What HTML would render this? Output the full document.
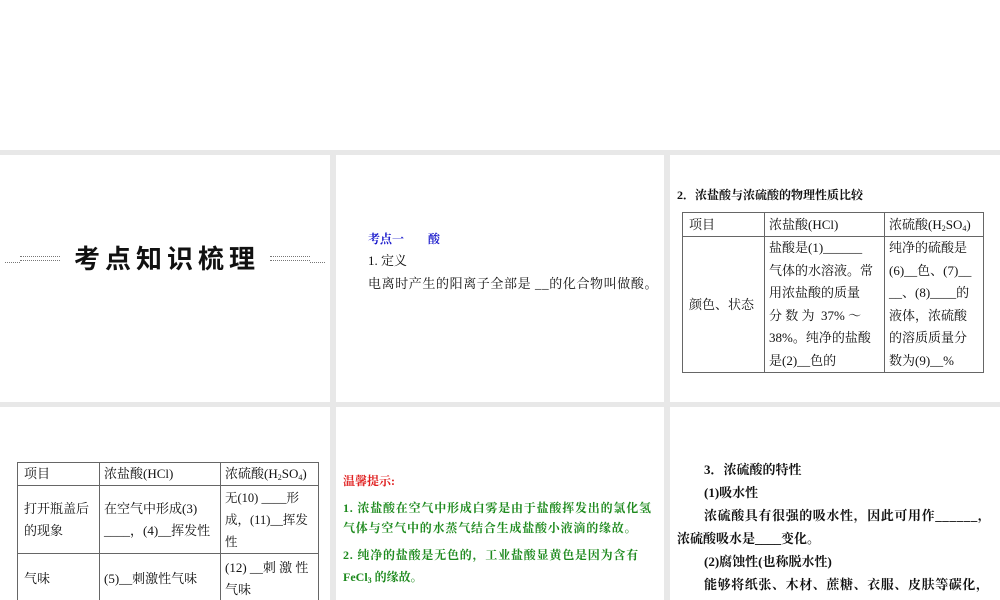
<!DOCTYPE html>
<html style="overflow:hidden"><head><meta charset="utf-8"><style>
*{margin:0;padding:0;box-sizing:border-box}
html,body{width:1000px;height:600px;overflow:hidden}
body{background:#fff;position:relative;font-family:"Liberation Serif","Noto Serif CJK SC",serif;color:#111;font-size:13px}
.g{position:absolute;background:#e8e8e8}
.t{position:absolute;white-space:nowrap;line-height:16px}
.b{font-weight:bold}
table{position:absolute;border-collapse:collapse;font-size:13px;table-layout:fixed}
td{border:1px solid #666;padding:0 4px;vertical-align:middle;line-height:22px;overflow:hidden;white-space:nowrap}
sub{font-size:8px;vertical-align:-2px;line-height:0}
.dl{position:absolute;height:5px;border-top:1px dotted #777;border-bottom:1px dotted #777}
</style></head><body>
<div class="g" style="left:0;top:150px;width:1000px;height:5px"></div>
<div class="g" style="left:0;top:402px;width:1000px;height:5px"></div>
<div class="g" style="left:330px;top:150px;width:6px;height:450px"></div>
<div class="g" style="left:664px;top:150px;width:6px;height:450px"></div>

<div class="dl" style="left:20px;top:256px;width:40px"></div>
<div class="dl" style="left:5px;top:262px;width:15px;height:0;border-bottom:none"></div>
<div class="dl" style="left:270px;top:256px;width:40px"></div>
<div class="dl" style="left:310px;top:262px;width:15px;height:0;border-bottom:none"></div>
<div class="t b" style="left:74px;top:244px;font-size:26px;line-height:30px;letter-spacing:5px;font-family:'Liberation Sans','Noto Sans CJK SC',sans-serif">考点知识梳理</div>

<div class="t b" style="left:368px;top:231px;color:#1a1acc;font-size:12px">考点一&nbsp;&nbsp;&nbsp;&nbsp;&nbsp;&nbsp;&nbsp;&nbsp;酸</div>
<div class="t" style="left:368px;top:253px">1. 定义</div>
<div class="t" style="left:368px;top:276px;letter-spacing:0.6px">电离时产生的阳离子全部是 __的化合物叫做酸。</div>

<div class="t b" style="left:677px;top:187px;font-size:12px">2．浓盐酸与浓硫酸的物理性质比较</div>
<table style="left:682px;top:212px;width:302px">
<col style="width:82px"><col style="width:120px"><col>
<tr style="height:24px"><td style="padding-left:6px">项目</td><td>浓盐酸(HCl)</td><td>浓硫酸(H<sub>2</sub>SO<sub>4</sub>)</td></tr>
<tr style="height:136px"><td style="padding-left:6px">颜色、状态</td><td style="line-height:22.5px">盐酸是(1)______<br>气体的水溶液。常<br>用浓盐酸的质量<br>分 数 为 &nbsp;37% ～<br>38%。纯净的盐酸<br>是(2)__色的</td><td style="line-height:22.5px">纯净的硫酸是<br>(6)__色、(7)__<br>__、(8)____的<br>液体，浓硫酸<br>的溶质质量分<br>数为(9)__%</td></tr>
</table>

<table style="left:17px;top:462px;width:302px">
<col style="width:82px"><col style="width:121px"><col>
<tr style="height:23px"><td style="padding-left:6px">项目</td><td>浓盐酸(HCl)</td><td>浓硫酸(H<sub>2</sub>SO<sub>4</sub>)</td></tr>
<tr style="height:68px"><td style="padding-left:6px">打开瓶盖后<br>的现象</td><td>在空气中形成(3)<br>____，(4)__挥发性</td><td style="line-height:22px;font-size:12.5px">无(10) ____形<br>成，(11)__挥发<br>性</td></tr>
<tr style="height:50px"><td style="padding-left:6px">气味</td><td>(5)__刺激性气味</td><td style="line-height:22px">(12) __刺 激 性<br>气味</td></tr>
</table>

<div class="t b" style="left:343px;top:473px;color:#e02020;font-size:12px">温馨提示:</div>
<div class="t b" style="left:343px;top:500px;color:#1e8a1e;font-size:12px;letter-spacing:0.8px">1. 浓盐酸在空气中形成白雾是由于盐酸挥发出的氯化氢</div>
<div class="t b" style="left:343px;top:520px;color:#1e8a1e;font-size:12px;letter-spacing:0.8px">气体与空气中的水蒸气结合生成盐酸小液滴的缘故。</div>
<div class="t b" style="left:343px;top:547px;color:#1e8a1e;font-size:12px;letter-spacing:0.8px">2. 纯净的盐酸是无色的，工业盐酸显黄色是因为含有</div>
<div class="t b" style="left:343px;top:569px;color:#1e8a1e;font-size:12px">FeCl<sub>3</sub> 的缘故。</div>

<div class="t b" style="left:704px;top:462px">3．浓硫酸的特性</div>
<div class="t b" style="left:704px;top:485px">(1)吸水性</div>
<div class="t b" style="left:704px;top:508px;letter-spacing:0.6px">浓硫酸具有很强的吸水性，因此可用作______，</div>
<div class="t b" style="left:677px;top:531px">浓硫酸吸水是____变化。</div>
<div class="t b" style="left:704px;top:554px">(2)腐蚀性(也称脱水性)</div>
<div class="t b" style="left:704px;top:577px;letter-spacing:0.6px">能够将纸张、木材、蔗糖、衣服、皮肤等碳化，</div>
</body></html>
